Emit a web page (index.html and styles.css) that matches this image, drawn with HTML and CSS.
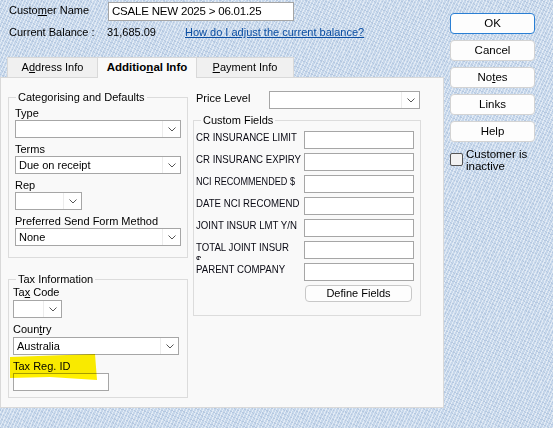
FILE: index.html
```html
<!DOCTYPE html>
<html>
<head>
<meta charset="utf-8">
<link rel="stylesheet" href="styles.css">
</head>
<body>
<div class="window">
  <div class="main">
    <div class="header">
      <div class="hrow">
        <span class="hlabel">Custo<u>m</u>er Name</span>
        <div class="textbox name-box">CSALE NEW 2025 &gt; 06.01.25</div>
      </div>
      <div class="hrow2">
        <span class="hlabel">Current Balance :</span>
        <span class="balance">31,685.09</span>
        <a class="link" href="#">How do I adjust the current balance?</a>
      </div>
    </div>
    <div class="tabs">
      <div class="tab tab-address">A<u>d</u>dress Info</div>
      <div class="tab tab-active">Additio<u>n</u>al Info</div>
      <div class="tab tab-payment"><u>P</u>ayment Info</div>
    </div>
    <div class="panel">
      <div class="col-left">
        <fieldset class="group g1">
          <legend>Categorising and Defaults</legend>
          <div class="flabel first">Type</div>
          <div class="select w166"><span class="sval"></span><span class="sbtn"><svg width="8" height="5" viewBox="0 0 8 5"><path d="M0.5 0.5 L4 4 L7.5 0.5" fill="none" stroke="#555" stroke-width="1"/></svg></span></div>
          <div class="flabel">Terms</div>
          <div class="select w166"><span class="sval">Due on receipt</span><span class="sbtn"><svg width="8" height="5" viewBox="0 0 8 5"><path d="M0.5 0.5 L4 4 L7.5 0.5" fill="none" stroke="#555" stroke-width="1"/></svg></span></div>
          <div class="flabel">Rep</div>
          <div class="select w67"><span class="sval"></span><span class="sbtn"><svg width="8" height="5" viewBox="0 0 8 5"><path d="M0.5 0.5 L4 4 L7.5 0.5" fill="none" stroke="#555" stroke-width="1"/></svg></span></div>
          <div class="flabel">Preferred Send Form Method</div>
          <div class="select w166"><span class="sval">None</span><span class="sbtn"><svg width="8" height="5" viewBox="0 0 8 5"><path d="M0.5 0.5 L4 4 L7.5 0.5" fill="none" stroke="#555" stroke-width="1"/></svg></span></div>
        </fieldset>
        <fieldset class="group g2">
          <legend>Tax Information</legend>
          <div class="flabel first">Ta<u>x</u> Code</div>
          <div class="select w49 tight"><span class="sval"></span><span class="sbtn"><svg width="8" height="5" viewBox="0 0 8 5"><path d="M0.5 0.5 L4 4 L7.5 0.5" fill="none" stroke="#555" stroke-width="1"/></svg></span></div>
          <div class="flabel">Coun<u>t</u>ry</div>
          <div class="select w166 tight"><span class="sval">Australia</span><span class="sbtn"><svg width="8" height="5" viewBox="0 0 8 5"><path d="M0.5 0.5 L4 4 L7.5 0.5" fill="none" stroke="#555" stroke-width="1"/></svg></span></div>
          <div class="flabel">Tax Reg. ID</div>
          <div class="textbox w96"></div>
        </fieldset>
      </div>
      <div class="col-right">
        <div class="price-row">
          <span class="plabel">Price Level</span>
          <div class="select w151"><span class="sval"></span><span class="sbtn"><svg width="8" height="5" viewBox="0 0 8 5"><path d="M0.5 0.5 L4 4 L7.5 0.5" fill="none" stroke="#555" stroke-width="1"/></svg></span></div>
        </div>
        <fieldset class="group g3">
          <legend>Custom Fields</legend>
          <div class="cfrows">
            <div class="cfrow"><span class="cflabel"><span class="cft">CR INSURANCE LIMIT</span></span><div class="textbox cfbox"></div></div>
            <div class="cfrow"><span class="cflabel"><span class="cft">CR INSURANC EXPIRY</span></span><div class="textbox cfbox"></div></div>
            <div class="cfrow"><span class="cflabel"><span class="cft narrow">NCI RECOMMENDED $</span></span><div class="textbox cfbox"></div></div>
            <div class="cfrow"><span class="cflabel"><span class="cft">DATE NCI RECOMEND</span></span><div class="textbox cfbox"></div></div>
            <div class="cfrow"><span class="cflabel"><span class="cft">JOINT INSUR LMT Y/N</span></span><div class="textbox cfbox"></div></div>
            <div class="cfrow"><span class="cflabel clip"><span class="cft">TOTAL JOINT INSUR<br>$</span></span><div class="textbox cfbox"></div></div>
            <div class="cfrow"><span class="cflabel"><span class="cft">PARENT COMPANY</span></span><div class="textbox cfbox"></div></div>
          </div>
          <div class="define-btn">Define Fields</div>
        </fieldset>
      </div>
    </div>
  </div>
  <div class="side">
    <div class="btn btn-ok">OK</div>
    <div class="btn">Cancel</div>
    <div class="btn">No<u>t</u>es</div>
    <div class="btn">Links</div>
    <div class="btn">Help</div>
    <div class="check-row">
      <span class="checkbox"></span>
      <span class="check-text">Customer is inactive</span>
    </div>
  </div>
  <div class="highlight"></div>
</div>
</body>
</html>
```
FILE: styles.css
```css
html, body {
  margin: 0;
  padding: 0;
}
body {
  width: 553px;
  height: 428px;
  overflow: hidden;
  font-family: "Liberation Sans", Arial, sans-serif;
  font-size: 11px;
  color: #000;
  background-color: #c6d7eb;
  background-image:
    repeating-linear-gradient(115deg, rgba(255,255,255,0.5) 0 1px, rgba(255,255,255,0) 1px 3px),
    repeating-linear-gradient(25deg, rgba(100,130,175,0.18) 0 1px, rgba(0,0,0,0) 1px 4px);
}
.window {
  position: relative;
  display: flex;
  height: 428px;
}
.main {
  width: 444px;
  display: flex;
  flex-direction: column;
}
.header {
  padding: 2px 0 0 9px;
}
.hrow {
  display: flex;
  align-items: flex-start;
  height: 19px;
}
.hlabel {
  width: 99px;
  line-height: 16px;
  flex: none;
}
.hrow2 .hlabel {
  width: 98px;
  line-height: 14px;
}
.textbox {
  box-sizing: border-box;
  height: 18px;
  background: #fff;
  border: 1px solid #a6a6a6;
}
.name-box {
  width: 186px;
  height: 19px;
  padding-left: 3px;
  line-height: 17px;
  font-size: 11.5px;
  letter-spacing: -0.2px;
}
.hrow2 {
  display: flex;
  margin-top: 4px;
  height: 14px;
  line-height: 14px;
}
.balance {
  width: 78px;
}
.link {
  color: #0b4ea2;
  text-decoration: underline;
}
.tabs {
  display: flex;
  margin-top: 18px;
  padding-left: 7px;
  height: 20px;
}
.tab {
  box-sizing: border-box;
  height: 20px;
  line-height: 18px;
  text-align: center;
  background: #f0f0f0;
  border: 1px solid #d9d9d9;
  border-bottom: none;
}
.tab-address { width: 91px; }
.tab-payment { width: 97px; border-left: none; }
.tab-active {
  position: relative;
  z-index: 1;
  width: 99px;
  height: 21px;
  margin-bottom: -1px;
  background: #f9f9f9;
  border-left: none;
  font-weight: bold;
  font-size: 11.5px;
}
.panel {
  box-sizing: border-box;
  width: 444px;
  height: 331px;
  background: #f9f9f9;
  border: 1px solid #d9d9d9;
  display: flex;
  align-items: flex-start;
  padding-top: 12px;
}
.col-left {
  margin-left: 7px;
  width: 180px;
}
.col-right {
  margin-left: 5px;
  width: 228px;
  margin-top: 1px;
}
fieldset.group {
  box-sizing: border-box;
  margin: 0;
  min-width: 0;
  border: 1px solid #dcdcdc;
}
fieldset.group legend {
  line-height: 14px;
}
.g1 {
  width: 180px;
  padding: 0 6px 11px 6px;
}
.g1 legend {
  margin-left: 1px;
  padding: 0 2px;
}
.g2 {
  width: 180px;
  margin-top: 14px !important;
  padding: 0 8px 6px 4px;
}
.g2 legend {
  margin-left: 3px;
  padding: 0 2px;
}
.flabel {
  line-height: 14px;
  margin-top: 4px;
}
.g1 .flabel.first { margin-top: 2px; }
.g2 .flabel.first { margin-top: -1px; }
.select {
  box-sizing: border-box;
  height: 18px;
  background: #fff;
  border: 1px solid #a6a6a6;
  display: flex;
  align-items: stretch;
}
.select.tight { margin-top: 1px; }
.sval {
  flex: 1;
  padding-left: 3px;
  line-height: 16px;
  overflow: hidden;
  white-space: nowrap;
}
.sbtn {
  width: 17px;
  border-left: 1px solid #ececec;
  display: flex;
  align-items: center;
  justify-content: center;
}
.w166 { width: 166px; }
.w67 { width: 67px; }
.w49 { width: 49px; }
.w151 { width: 151px; }
.w96 { width: 96px; }
.price-row {
  display: flex;
  align-items: flex-start;
}
.plabel {
  width: 73px;
  padding-left: 3px;
  line-height: 14px;
}
.g3 {
  width: 228px;
  margin-top: 4px !important;
  padding: 0 6px 13px 2px;
}
.g3 legend {
  margin-left: 5px;
  padding: 0 2px;
}
.cfrows {
  display: flex;
  flex-direction: column;
  gap: 4px;
  margin-top: 4px;
}
.cfrow {
  display: flex;
  align-items: flex-start;
  height: 18px;
}
.cflabel {
  width: 108px;
  flex: none;
  line-height: 13px;
  font-size: 11.5px;
  color: #0a0a14;
}
.cft {
  display: inline-block;
  white-space: nowrap;
  transform: scaleX(0.84);
  transform-origin: 0 0;
}
.cft.narrow {
  transform: scaleX(0.79);
}
.cflabel.clip {
  height: 19px;
  overflow: hidden;
}
.cfbox {
  width: 110px;
}
.define-btn {
  box-sizing: border-box;
  width: 107px;
  height: 17px;
  margin: 4px 0 0 109px;
  border: 1px solid #c8c8c8;
  border-radius: 4px;
  background: #fdfdfd;
  text-align: center;
  line-height: 15px;
}
.side {
  margin-left: 6px;
  width: 85px;
  padding-top: 13px;
  display: flex;
  flex-direction: column;
  gap: 6px;
}
.btn {
  box-sizing: border-box;
  height: 21px;
  background: #fdfdfd;
  border: 1px solid #d3d3d3;
  border-radius: 4px;
  text-align: center;
  line-height: 19px;
  font-size: 11.5px;
}
.btn-ok {
  border-color: #2a7fd4;
}
.check-row {
  display: flex;
  align-items: flex-start;
}
.checkbox {
  box-sizing: border-box;
  width: 13px;
  height: 13px;
  margin-top: 5px;
  margin-right: 3px;
  border: 1px solid #555;
  border-radius: 2px;
  background: #f2f2f2;
  flex: none;
}
.check-text {
  width: 66px;
  line-height: 12px;
  font-size: 11.5px;
}
.highlight {
  position: absolute;
  left: 10px;
  top: 354px;
  width: 87px;
  height: 27px;
  background: #fff000;
  mix-blend-mode: multiply;
  clip-path: polygon(0 3px, 85px 0, 87px 26px, 40px 23px, 0 24px);
}
```
